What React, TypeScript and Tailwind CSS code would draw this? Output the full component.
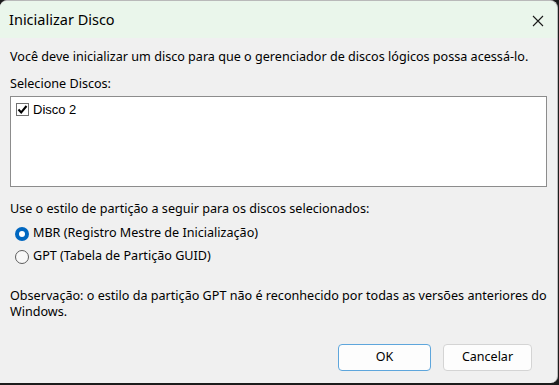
import React from "react";

// Diálogo "Inicializar Disco" — estilo Windows 11
const font = { fontFamily: '"Segoe UI", "Noto Sans", "Liberation Sans", sans-serif' };

function Radio({ checked, label }: { checked?: boolean; label: string }) {
  return (
    <label className="flex items-center gap-[4px] h-[23px]">
      {checked ? (
        <span className="w-[14px] h-[14px] rounded-full bg-[#0067c0] flex items-center justify-center">
          <span className="w-[6px] h-[6px] rounded-full bg-white" />
        </span>
      ) : (
        <span className="w-[14px] h-[14px] rounded-full border border-[#5d5d5d] bg-[#f8f8f8]" />
      )}
      <span>{label}</span>
    </label>
  );
}

export default function App() {
  return (
    <div className="w-[559px] h-[385px] bg-[#1c1c1c] overflow-hidden text-[12.6px] text-black" style={font}>
      <div className="w-[558px] h-[383px] bg-[#f0f0f0] rounded-tl-[7px] rounded-tr-[8px] rounded-br-[7px] border-t border-r border-[#b9b9b9] overflow-hidden flex flex-col">
        {/* Title bar */}
        <div className="h-[37px] bg-[#eaf6eb] flex items-center justify-between pl-[9px] pr-[13px] shrink-0">
          <span className="text-[14.5px] pt-[1px]">Inicializar Disco</span>
          <svg width="12" height="12" viewBox="0 0 12 12" className="mt-[2px]">
            <path d="M1 1 L11 11 M11 1 L1 11" stroke="#1a1a1a" strokeWidth="1.1" />
          </svg>
        </div>

        {/* Body */}
        <div className="flex flex-col px-[10px] pt-[11px]">
          <p className="leading-[16px]">
            Você deve inicializar um disco para que o gerenciador de discos lógicos possa acessá-lo.
          </p>
          <p className="leading-[16px] mt-[11px]">Selecione Discos:</p>

          <div className="mt-[4px] h-[91px] w-[537px] bg-white border border-[#8c8c8c] px-[5px] pt-[3px]">
            <div className="flex items-center gap-[4px]">
              <span className="w-[13px] h-[13px] border border-[#707070] bg-white flex items-center justify-center">
                <svg width="11" height="11" viewBox="0 0 11 11">
                  <path d="M1.5 5.5 L4.2 8.5 L9.5 2" stroke="#000" strokeWidth="2" fill="none" />
                </svg>
              </span>
              <span className="text-[13px]" style={{ fontFamily: '"Liberation Sans", sans-serif' }}>
                Disco 2
              </span>
            </div>
          </div>

          <p className="leading-[16px] mt-[14px]">Use o estilo de partição a seguir para os discos selecionados:</p>
          <div className="flex flex-col pl-[5px] mt-[5px]">
            <Radio checked label="MBR (Registro Mestre de Inicialização)" />
            <Radio label="GPT (Tabela de Partição GUID)" />
          </div>

          <p className="leading-[16px] mt-[20px] w-[540px]">
            Observação: o estilo da partição GPT não é reconhecido por todas as versões anteriores do Windows.
          </p>

          {/* Buttons */}
          <div className="flex justify-end gap-[12px] mt-[24px] pr-[15px]">
            <button className="w-[93px] h-[27px] rounded-[4px] bg-[#fdfdfd] border border-[#5ea6dc] text-[12.5px]">
              OK
            </button>
            <button className="w-[89px] h-[27px] rounded-[4px] bg-[#fdfdfd] border border-[#d4d4d4] text-[12.5px]">
              Cancelar
            </button>
          </div>
        </div>
      </div>
    </div>
  );
}
